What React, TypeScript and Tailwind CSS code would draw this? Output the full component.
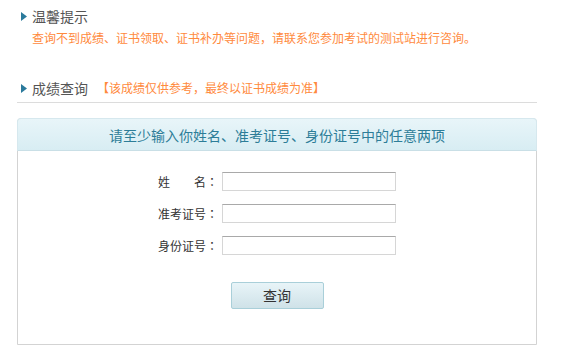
import React, { useState } from 'react';

const font = { fontFamily: '"Microsoft YaHei", "Noto Sans CJK SC", "Noto Sans", sans-serif' };

function Arrow() {
  return (
    <svg width="6" height="9" viewBox="0 0 6 9" className="mr-[5px] shrink-0">
      <path d="M0 0 L6 4.5 L0 9 Z" fill="#2b7a9c" />
    </svg>
  );
}

function Field({ label, value, onChange }: { label: string; value: string; onChange: (v: string) => void }) {
  return (
    <div className="flex items-center">
      <label className="w-[60px] text-[12px] leading-[19px] text-[#333] whitespace-pre">
        {label}
        <span className="[font-family:'Noto_Sans_CJK_TC',sans-serif]">：</span>
      </label>
      <input
        className="ml-[4px] w-[174px] h-[19px] border border-[#d6d6d6] border-t-[#a9a9a9] bg-white px-1 text-[12px] outline-none"
        value={value}
        onChange={(e) => onChange(e.target.value)}
      />
    </div>
  );
}

export default function App() {
  const [name, setName] = useState("");
  const [ticket, setTicket] = useState("");
  const [idNo, setIdNo] = useState("");

  return (
    <div className="w-[587px] h-[357px] bg-white pl-[17px] pr-[50px] overflow-hidden" style={font}>
      <div className="pt-[6px] flex items-center h-[26px] pl-[4px]">
        <Arrow />
        <span className="text-[14px] leading-[20px] text-[#555]">温馨提示</span>
      </div>
      <p className="mt-[4px] pl-[15px] text-[12px] leading-[16px] text-[#ff8a3d]">
        查询不到成绩、证书领取、证书补办等问题，请联系您参加考试的测试站进行咨询。
      </p>

      <div className="mt-[32px] flex items-center h-[20px] pl-[4px]">
        <Arrow />
        <span className="text-[14px] leading-[20px] text-[#555]">成绩查询</span>
        <span className="ml-[9px] text-[12px] leading-[20px] text-[#ff8a3d]">【该成绩仅供参考，最终以证书成绩为准】</span>
      </div>
      <div className="mt-[4px] h-px bg-[#dcdcdc]" />

      <div className="mt-[15px] border border-[#d3d3d3] rounded-t-[4px] h-[227px] flex flex-col">
        <div className="h-[33px] -mx-px -mt-px rounded-t-[4px] border border-[#d6e8ee] border-b-[#c9dfe6] bg-gradient-to-b from-[#e8f5f9] to-[#d8edf3] flex items-center justify-center">
          <span className="text-[14px] text-[#2d7d98] leading-[20px]">请至少输入你姓名、准考证号、身份证号中的任意两项</span>
        </div>
        <form className="flex flex-col items-center pt-[21px]" onSubmit={(e) => e.preventDefault()}>
          <div className="flex flex-col gap-[13px]">
            <Field label={"姓　　名"} value={name} onChange={setName} />
            <Field label="准考证号" value={ticket} onChange={setTicket} />
            <Field label="身份证号" value={idNo} onChange={setIdNo} />
          </div>
          <button
            type="submit"
            className="mt-[27px] w-[93px] h-[27px] rounded-[2px] border border-[#a9cfd9] bg-gradient-to-b from-[#e8f4f8] to-[#cfe2e8] text-[14px] text-[#333]"
          >
            查询
          </button>
        </form>
      </div>
    </div>
  );
}
